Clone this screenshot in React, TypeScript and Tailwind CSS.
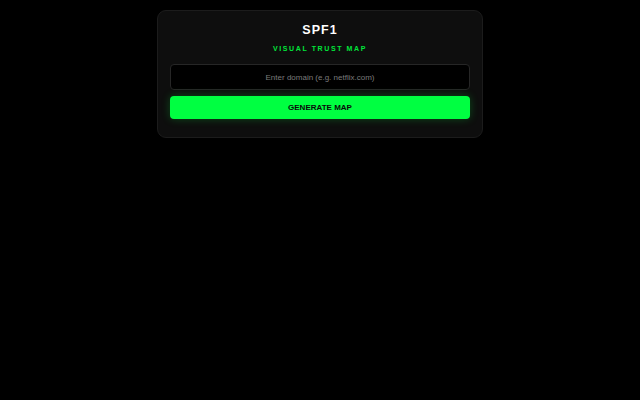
export default function App() {
  return (
    <div className="min-h-screen w-full bg-black pt-[10px] font-['Liberation_Sans',Arial,sans-serif]">
      <div className="mx-auto w-[326px] rounded-[9px] border border-[#1c1c1c] bg-[#0e0e0e] px-[12px] pb-[18px] pt-[11px] shadow-[0_0_12px_rgba(0,0,0,0.6)]">
        <h1 className="text-center text-[12.5px] font-bold leading-[16px] tracking-[1px] text-white">
          SPF1
        </h1>
        <p className="mt-[6px] text-center text-[7px] font-bold leading-[9px] tracking-[1.6px] text-[#00e63a]">
          VISUAL TRUST MAP
        </p>
        <input
          className="mt-[11px] block h-[26px] w-full rounded-[4px] border border-[#262626] bg-black text-center text-[8px] text-white outline-none placeholder:text-[#7a7a7a]"
          placeholder="Enter domain (e.g. netflix.com)"
        />
        <button className="mt-[6px] block h-[23px] w-full rounded-[4px] bg-[#00ff41] text-center text-[8px] font-bold text-[#0a0a0a] shadow-[0_0_8px_rgba(0,255,65,0.25)]">
          GENERATE MAP
        </button>
      </div>
    </div>
  );
}
